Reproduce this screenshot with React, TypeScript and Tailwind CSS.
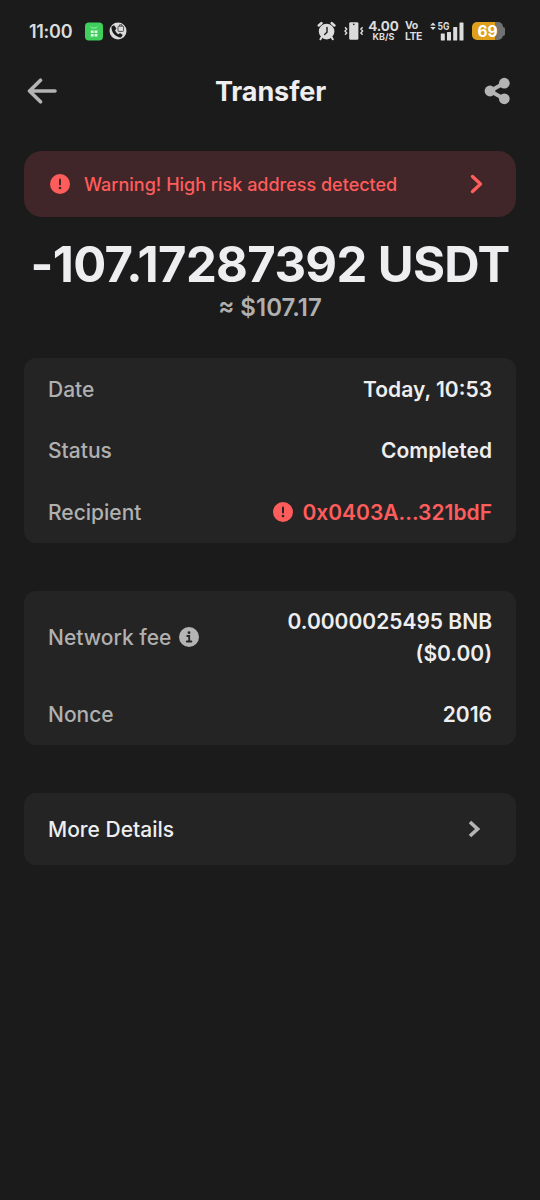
import React from 'react';

const AlarmIcon = () => (
  <svg width="20" height="20" viewBox="0 0 20 20" className="text-[#dcdcdc]">
    <circle cx="9.6" cy="10.6" r="7.8" fill="currentColor" />
    <path d="M1.8 4.4 4.4 2.2M17.4 4.4 14.8 2.2" stroke="currentColor" strokeWidth="2.6" strokeLinecap="round" />
    <path d="M4.4 16.6 3.4 18.2M14.8 16.6l1 1.6" stroke="currentColor" strokeWidth="2" strokeLinecap="round" />
    <path d="M10 6.4v4.8l-2.4 2.2" stroke="#1b1b1b" strokeWidth="1.4" fill="none" strokeLinecap="round" />
  </svg>
);

const VibrateIcon = () => (
  <svg width="20" height="20" viewBox="0 0 20 20" className="text-[#dcdcdc]">
    <rect x="5.2" y="1.2" width="9.2" height="17.6" rx="1.4" fill="currentColor" />
    <circle cx="9.8" cy="3.4" r="0.8" fill="#1b1b1b" />
    <path
      d="M1 6.2 2.7 8 1 10l1.7 2L1 13.8M18.6 6.2 16.9 8l1.7 2-1.7 2 1.7 1.8"
      stroke="currentColor"
      strokeWidth="1.4"
      fill="none"
    />
  </svg>
);

const SignalIcon = () => (
  <svg width="35" height="20" viewBox="0 0 35 20" fill="#dcdcdc">
    <path d="M0.2 4.4 3 1.4l2.8 3zM0.2 6 3 9l2.8-3z" />
    <rect x="10.8" y="12.5" width="4" height="7" rx="0.5" />
    <rect x="17" y="11" width="4" height="8.5" rx="0.5" />
    <rect x="23.2" y="6" width="4" height="13.5" rx="0.5" />
    <rect x="29.5" y="1.5" width="4" height="18" rx="0.5" />
    <text x="7.6" y="8.8" fontSize="10.5" fontWeight="700" textLength="12" lengthAdjust="spacingAndGlyphs">
      5G
    </text>
  </svg>
);

const StatusBar = () => (
  <div className="flex h-[62px] items-center pl-[29px] pr-[35px] text-[#dcdcdc]">
    <span className="w-[56px] text-[18px] font-semibold tracking-[-0.3px]">11:00</span>
    <svg width="18" height="19" viewBox="0 0 18 19" className="shrink-0">
      <rect y="0.5" width="18" height="18" rx="4" fill="#3ecf5c" />
      <path d="M5.5 4.6c1.8 2 5.2 2 7 0" stroke="#9af0a8" strokeWidth="1" fill="none" />
      <path d="M5.8 8.6h2.8v2.4H5.8zM9.6 8.6h2.8v2.4H9.6zM5.8 12h2.8v2.4H5.8zM9.6 12h2.8v2.4H9.6z" fill="#e8ffe9" />
    </svg>
    <svg width="18" height="18" viewBox="0 0 18 18" className="ml-[6px] shrink-0">
      <circle cx="9" cy="9" r="8.5" fill="#dcdcdc" />
      {/* handset */}
      <path
        d="M2.6 4.4C1.8 9.6 6 15 12 15.4l1.8-2.3-2.8-2.1-1.5 1.2C7.8 11.4 6.6 9.8 6 8l1.5-1.3L5.2 3.2z"
        fill="#1b1b1b"
      />
      <rect x="9" y="4.2" width="5.6" height="5.2" rx="0.8" fill="none" stroke="#1b1b1b" strokeWidth="0.7" />
      <path d="M10.6 4.2V2.8h2.4v1.4" fill="none" stroke="#1b1b1b" strokeWidth="0.7" />
    </svg>

    <div className="ml-auto flex items-center">
      <AlarmIcon />
      <div className="ml-[7px] flex">
        <VibrateIcon />
      </div>
      <div className="ml-[4px] flex w-[31px] flex-col items-center font-bold">
        <span className="text-[13.5px] leading-[11px] tracking-[-0.1px]">4.00</span>
        <span className="text-[9px] leading-[9px]">KB/S</span>
      </div>
      <div className="ml-[6px] flex w-[17px] flex-col pt-px text-[10.5px] font-bold leading-[10.5px] tracking-[-0.5px]">
        <span>Vo</span>
        <span>LTE</span>
      </div>
      <div className="ml-[8px] flex">
        <SignalIcon />
      </div>
      <div className="ml-[7px] flex items-center">
        <div className="flex h-[18px] w-[31px] items-center justify-center rounded-[5px] bg-linear-to-r from-[#dfa01c] from-75% to-[#717171] to-75% pt-px">
          <span className="text-[15.5px] font-bold leading-none text-white">69</span>
        </div>
        <div className="h-[9px] w-[2px] rounded-r-full bg-[#717171]" />
      </div>
    </div>
  </div>
);

const AlertIcon = ({ hole }: { hole: string }) => (
  <svg width="20" height="20" viewBox="0 0 20 20" className="mb-px shrink-0">
    <circle cx="10" cy="10" r="10" fill="#ff5c5c" />
    <path d="M10 5.5v5" stroke={hole} strokeWidth="2" strokeLinecap="round" />
    <circle cx="10" cy="14" r="1.3" fill={hole} />
  </svg>
);

const InfoIcon = () => (
  <svg width="20" height="20" viewBox="0 0 20 20" className="mb-px shrink-0">
    <circle cx="10" cy="10" r="10" fill="#b4b4b4" />
    <circle cx="10" cy="5.7" r="1.4" fill="#242424" />
    <path d="M8.2 9h2v5.2M7.8 14.5h4.6" stroke="#242424" strokeWidth="1.8" fill="none" strokeLinecap="round" />
  </svg>
);

const Row = ({ label, children }: { label: React.ReactNode; children: React.ReactNode }) => (
  <div className="flex items-center justify-between px-6 pt-[15.5px] pb-[14.5px]">
    <div className="flex items-center gap-2 font-medium text-[#b0b0b0]">{label}</div>
    <div className="flex items-center gap-[9px] text-right font-semibold text-[#eeeef0]">{children}</div>
  </div>
);

const App = () => {
  return (
    <div className="min-h-[1200px] w-full bg-[#1b1b1b] font-['Inter',sans-serif]">
      <StatusBar />

      {/* Header */}
      <header className="flex h-[58px] items-center justify-between pl-[27px] pr-[30px]">
        <svg width="30" height="26" viewBox="0 0 30 26" fill="none" stroke="#b4b4b4" strokeWidth="3.6" strokeLinecap="round" strokeLinejoin="round">
          <path d="M28 13H2.5M13.5 2.2 2.5 13l11 10.8" />
        </svg>
        <h1 className="text-[27px] font-bold leading-none tracking-[-0.1px] text-[#eeeef0]">Transfer</h1>
        <svg width="26" height="28" viewBox="0 0 26 28" fill="#b4b4b4">
          <path d="M20.5 6 6 14l14.5 8" fill="none" stroke="#b4b4b4" strokeWidth="3.8" />
          <circle cx="6" cy="14" r="5.4" />
          <circle cx="20.3" cy="6.2" r="5.4" />
          <circle cx="20.3" cy="21.8" r="5.4" />
        </svg>
      </header>

      <main className="px-6 pt-[31px]">
        {/* Risk warning */}
        <div className="flex h-[66px] items-center rounded-[18px] bg-[#402628] pl-[26px] pr-[33px] pt-px">
          <AlertIcon hole="#402628" />
          <span className="ml-[14px] flex-1 text-[18px] font-medium text-[#ff5c5c]">Warning! High risk address detected</span>
          <svg
            width="13"
            height="20"
            viewBox="0 0 13 20"
            fill="none"
            stroke="#ff5c5c"
            strokeWidth="3.4"
            strokeLinecap="round"
            strokeLinejoin="round"
            className="mb-px"
          >
            <path d="m2.5 2.5 8 7.5-8 7.5" />
          </svg>
        </div>

        {/* Amount */}
        <div className="-mx-6 mt-[18px] text-center">
          <div className="whitespace-nowrap text-[49px] font-bold leading-[59px] tracking-[-0.65px] text-[#eeeef0]">-107.17287392 USDT</div>
          <div className="text-[24px] font-semibold leading-[28px] text-[#b0b0b0]">≈ $107.17</div>
        </div>

        <section className="mt-[36px] rounded-xl bg-[#242424] text-[21px] leading-[31.5px]">
          <Row label="Date">Today, 10:53</Row>
          <Row label="Status">Completed</Row>
          <Row label="Recipient">
            <AlertIcon hole="#242424" />
            <span className="text-[#ff5c5c]">0x0403A...321bdF</span>
          </Row>
        </section>

        <section className="mt-12 rounded-xl bg-[#242424] text-[21px] leading-[31.5px]">
          <Row
            label={
              <>
                Network fee <InfoIcon />
              </>
            }
          >
            <span>
              0.0000025495 BNB
              <br />
              ($0.00)
            </span>
          </Row>
          <Row label="Nonce">2016</Row>
        </section>

        <section className="mt-12 flex h-[72px] items-center justify-between rounded-xl bg-[#242424] pl-6 pr-[36px] text-[21px] font-medium text-[#eeeef0]">
          <span className="pt-px">More Details</span>
          <svg width="12" height="18" viewBox="0 0 12 18" fill="none" stroke="#b4b4b4" strokeWidth="3.6">
            <path d="m2 2 7.5 7L2 16" />
          </svg>
        </section>
      </main>
    </div>
  );
};

export default App;
